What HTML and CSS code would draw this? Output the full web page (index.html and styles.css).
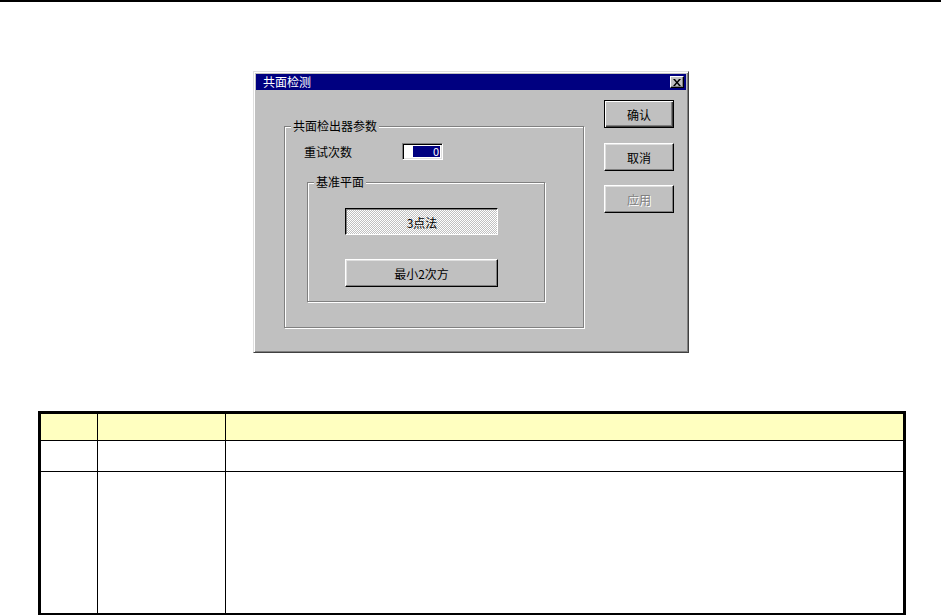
FILE: index.html
```html
<!DOCTYPE html>
<html lang="zh-CN">
<head>
    <meta charset="UTF-8">
    <title>共面检测</title>
    <link rel="stylesheet" href="styles.css">
</head>
<body>
    <div class="page-rule"></div>

    <div class="dialog">
        <div class="title-bar">
            <span class="title-text">共面检测</span>
            <span class="close-btn">
                <svg width="8" height="7" viewBox="0 0 8 7">
                    <path d="M0 0h2l2 2.5L6 0h2L5 3.5 8 7H6L4 4.5 2 7H0l3-3.5z" fill="#000"/>
                </svg>
            </span>
        </div>
        <div class="dialog-body">
            <div class="group outer-group">
                <span class="group-label">共面检出器参数</span>
                <div class="retry-row">
                    <span class="retry-label">重试次数</span>
                    <div class="spin-box"><span class="spin-value">0</span></div>
                </div>
                <div class="group inner-group">
                    <span class="group-label">基准平面</span>
                    <div class="btn wide pressed">3点法</div>
                    <div class="btn wide second">最小2次方</div>
                </div>
            </div>
            <div class="side-buttons">
                <div class="btn side default">确认</div>
                <div class="btn side">取消</div>
                <div class="btn side disabled">应用</div>
            </div>
        </div>
    </div>

    <table class="info-table">
        <tr class="head-row">
            <td class="col-a"></td>
            <td class="col-b"></td>
            <td></td>
        </tr>
        <tr class="row-2">
            <td></td>
            <td></td>
            <td></td>
        </tr>
        <tr class="row-3">
            <td></td>
            <td></td>
            <td></td>
        </tr>
    </table>
</body>
</html>
```

FILE: styles.css
```css
body {
    margin: 0;
    background: #ffffff;
    font-family: "Noto Sans CJK SC", "DejaVu Sans", sans-serif;
    font-size: 12px;
    color: #000000;
}

.page-rule {
    height: 2px;
    background: #000000;
}

.dialog {
    box-sizing: border-box;
    width: 436px;
    height: 282px;
    margin: 69px 0 0 253px;
    padding: 2px;
    background: #c0c0c0;
    border: 1px solid;
    border-color: #dfdfdf #404040 #404040 #dfdfdf;
    box-shadow: inset 1px 1px 0 #ffffff, inset -1px -1px 0 #808080;
}

.title-bar {
    height: 16px;
    background: #000080;
    display: flex;
    align-items: center;
    justify-content: space-between;
    padding: 0 2px 0 7px;
}

.title-text {
    color: #ffffff;
    line-height: 16px;
}

.close-btn {
    box-sizing: border-box;
    width: 14px;
    height: 12px;
    background: #c0c0c0;
    border: 1px solid;
    border-color: #ffffff #000000 #000000 #ffffff;
    box-shadow: inset -1px -1px 0 #808080;
    display: flex;
    align-items: center;
    justify-content: center;
}

.dialog-body {
    display: flex;
    padding-left: 28px;
}

.group {
    position: relative;
    box-sizing: border-box;
    border: 1px solid #808080;
    box-shadow: inset 1px 1px 0 #ffffff, 1px 1px 0 #ffffff;
}

.group-label {
    position: absolute;
    top: -9px;
    left: 6px;
    padding: 0 2px;
    background: #c0c0c0;
    line-height: 16px;
    white-space: nowrap;
}

.outer-group {
    width: 300px;
    height: 202px;
    margin-top: 36px;
}

.retry-row {
    display: flex;
    align-items: center;
    margin: 16px 0 0 19px;
}

.retry-label {
    width: 98px;
}

.spin-box {
    box-sizing: border-box;
    width: 41px;
    height: 17px;
    border: 1px solid;
    border-color: #808080 #ffffff #ffffff #808080;
    box-shadow: inset 1px 1px 0 #000000, inset -1px -1px 0 #dfdfdf;
    background: #ffffff;
    padding: 2px 2px 2px 10px;
    display: flex;
}

.spin-value {
    flex: 1;
    background: #000080;
    color: #ffffff;
    text-align: right;
    line-height: 11px;
    font-size: 11px;
    padding-right: 1px;
}

.inner-group {
    width: 238px;
    height: 120px;
    margin: 22px 0 0 22px;
    padding: 25px 0 0 37px;
}

.btn {
    box-sizing: border-box;
    display: flex;
    align-items: center;
    justify-content: center;
    background: #c0c0c0;
    border: 1px solid;
    border-color: #ffffff #000000 #000000 #ffffff;
    box-shadow: inset -1px -1px 0 #808080, inset 1px 1px 0 #dfdfdf;
}

.wide {
    width: 153px;
    height: 27px;
}

.wide.second {
    height: 28px;
    margin-top: 24px;
}

.pressed {
    border-color: #000000 #ffffff #ffffff #000000;
    box-shadow: inset 1px 1px 0 #808080;
    background: repeating-conic-gradient(#ffffff 0 25%, #c0c0c0 0 50%) 0 0 / 2px 2px;
    padding: 1px 0 0 1px;
}

.side-buttons {
    display: flex;
    flex-direction: column;
    gap: 15px;
    margin: 10px 0 0 20px;
}

.side {
    width: 70px;
    height: 28px;
}

.default {
    border-color: #000000;
    box-shadow: inset 1px 1px 0 #ffffff, inset -1px -1px 0 #404040, inset -2px -2px 0 #808080;
}

.disabled {
    color: #808080;
    text-shadow: 1px 1px 0 #ffffff;
    margin-top: -1px;
}

.info-table {
    width: 868px;
    margin: 58px 0 0 38px;
    border-collapse: collapse;
    border: 3px solid #000000;
}

.info-table td {
    border: 1px solid #000000;
    padding: 0;
}

.head-row td {
    background: #ffffc0;
    height: 26px;
}

.row-2 td {
    height: 30px;
}

.row-3 td {
    height: 141px;
}

.col-a {
    width: 56px;
}

.col-b {
    width: 127px;
}
```
